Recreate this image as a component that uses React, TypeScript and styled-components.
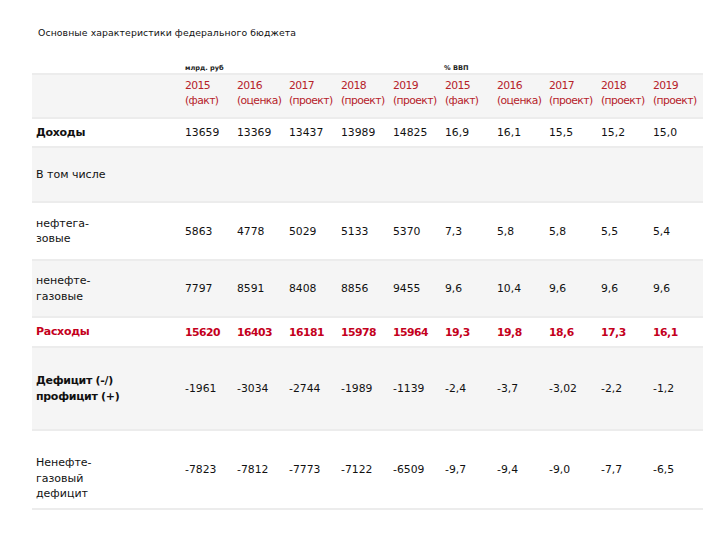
import React from "react";
import styled, { createGlobalStyle } from "styled-components";

const Global = createGlobalStyle`
  html, body { margin: 0; padding: 0; background: #fff; }
  body { font-family: "DejaVu Sans", Verdana, sans-serif; color: #111; }
`;

const Page = styled.div`
  width: 720px;
  height: 540px;
  padding: 27px 0 0 32px;
  box-sizing: border-box;
`;

const Title = styled.div`
  margin-left: 6px;
  font-size: 9.3px;
  line-height: 12px;
  letter-spacing: 0.1px;
  color: #111;
`;

const Table = styled.div`
  margin-top: 23px;
  width: 671px;
  display: flex;
  flex-direction: column;
  border-bottom: 2px solid #ececec;
`;

const cols = "149px repeat(9, 52px) 54px";

const UnitsRow = styled.div`
  display: grid;
  grid-template-columns: ${cols};
  height: 11px;
  align-items: center;
  font-size: 6.6px;
  font-weight: bold;
  color: #222;
`;

const Unit = styled.div<{ $start: number; $span: number }>`
  grid-column: ${(p) => p.$start} / span ${(p) => p.$span};
  padding-left: ${(p) => (p.$start === 2 ? 4 : 3)}px;
`;

const Row = styled.div<{ $h: number; $gray: boolean }>`
  display: grid;
  grid-template-columns: ${cols};
  height: ${(p) => p.$h}px;
  box-sizing: border-box;
  border-top: 2px solid #ececec;
  background: ${(p) => (p.$gray ? "#f5f5f5" : "#ffffff")};
  align-items: center;
`;

const Label = styled.div<{ $bold?: boolean; $red?: boolean; $offset?: number }>`
  padding-left: 4px;
  padding-top: ${(p) => (p.$offset ? p.$offset * 2 : 0)}px;
  font-size: 11px;
  line-height: 15.5px;
  font-weight: ${(p) => (p.$bold ? "bold" : "normal")};
  letter-spacing: ${(p) => (p.$bold ? "-0.3px" : "0")};
  color: ${(p) => (p.$red ? "#c4001c" : "#111")};
  white-space: pre-line;
`;

const Cell = styled.div<{ $bold?: boolean; $red?: boolean }>`
  padding-left: 4px;
  font-size: 10.8px;
  line-height: 15px;
  font-weight: ${(p) => (p.$bold ? "bold" : "normal")};
  color: ${(p) => (p.$red ? "#c4001c" : "#111")};
  letter-spacing: ${(p) => (p.$bold ? "-0.5px" : "0")};
  white-space: nowrap;
`;

const HeadCell = styled.div`
  padding-left: 4px;
  padding-bottom: 6px;
  font-size: 10.8px;
  line-height: 15px;
  letter-spacing: -0.6px;
  color: #b5222a;
  white-space: pre-line;
`;

const headers = [
  "2015\n(факт)",
  "2016\n(оценка)",
  "2017\n(проект)",
  "2018\n(проект)",
  "2019\n(проект)",
  "2015\n(факт)",
  "2016\n(оценка)",
  "2017\n(проект)",
  "2018\n(проект)",
  "2019\n(проект)",
];

type RowData = {
  label: string;
  values: string[];
  h: number;
  bold?: boolean;
  red?: boolean;
  boldValues?: boolean;
  offset?: number;
};

const rows: RowData[] = [
  { label: "Доходы", bold: true, h: 29, values: ["13659", "13369", "13437", "13989", "14825", "16,9", "16,1", "15,5", "15,2", "15,0"] },
  { label: "В том числе", h: 55, values: [] },
  { label: "нефтега-\nзовые", h: 58, values: ["5863", "4778", "5029", "5133", "5370", "7,3", "5,8", "5,8", "5,5", "5,4"] },
  { label: "ненефте-\nгазовые", h: 57, values: ["7797", "8591", "8408", "8856", "9455", "9,6", "10,4", "9,6", "9,6", "9,6"] },
  { label: "Расходы", bold: true, red: true, boldValues: true, h: 30, values: ["15620", "16403", "16181", "15978", "15964", "19,3", "19,8", "18,6", "17,3", "16,1"] },
  { label: "Дефицит (-/)\nпрофицит (+)", bold: true, h: 83, values: ["-1961", "-3034", "-2744", "-1989", "-1139", "-2,4", "-3,7", "-3,02", "-2,2", "-1,2"] },
  { label: "Ненефте-\nгазовый\nдефицит", h: 79, offset: 9, values: ["-7823", "-7812", "-7773", "-7122", "-6509", "-9,7", "-9,4", "-9,0", "-7,7", "-6,5"] },
];

export default function App() {
  return (
    <>
      <Global />
      <Page>
        <Title>Основные характеристики федерального бюджета</Title>
        <Table>
          <UnitsRow>
            <Unit $start={2} $span={5}>млрд. руб</Unit>
            <Unit $start={7} $span={5}>% ВВП</Unit>
          </UnitsRow>
          <Row $h={44} $gray={true}>
            <div />
            {headers.map((h, i) => (
              <HeadCell key={i}>{h}</HeadCell>
            ))}
          </Row>
          {rows.map((r, i) => (
            <Row key={i} $h={r.h} $gray={i % 2 === 1}>
              <Label $bold={r.bold} $red={r.red} $offset={r.offset}>{r.label}</Label>
              {r.values.map((v, j) => (
                <Cell key={j} $bold={r.boldValues} $red={r.red}>{v}</Cell>
              ))}
            </Row>
          ))}
        </Table>
      </Page>
    </>
  );
}
